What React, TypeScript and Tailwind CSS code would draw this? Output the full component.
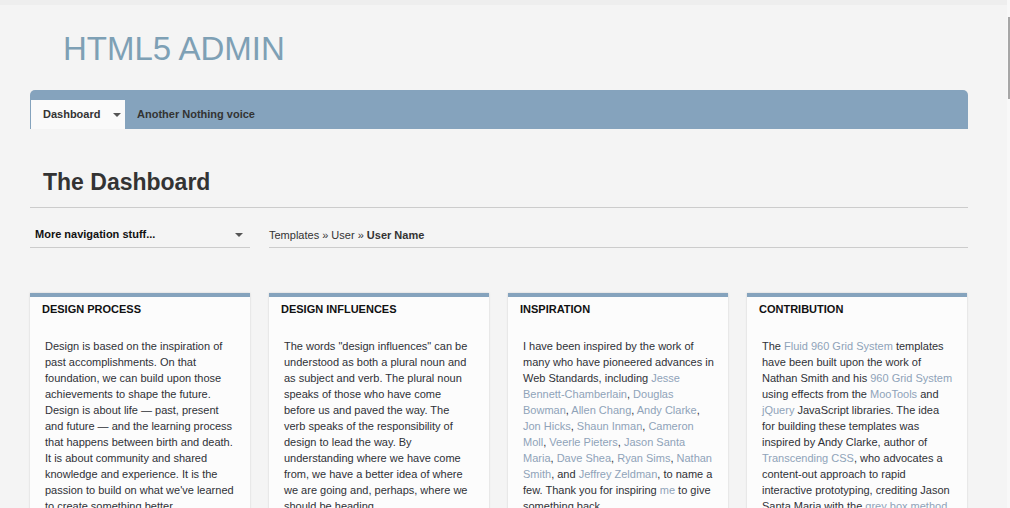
import React from "react";

const A: React.FC<{ children: React.ReactNode }> = ({ children }) => (
  <a href="#" className="text-[#8fa3b9]">
    {children}
  </a>
);

const Caret = () => (
  <span className="block w-0 h-0 border-l-[4px] border-r-[4px] border-t-[4px] border-l-transparent border-r-transparent border-t-[#555]" />
);

interface CardProps {
  title: string;
  lines: React.ReactNode[];
}

const Card: React.FC<CardProps> = ({ title, lines }) => (
  <div className="bg-[#fcfcfc] border-t-4 border-[#85a3bd] shadow-[0_0_2px_rgba(0,0,0,0.15)] h-[240px]">
    <h3 className="pl-[12px] pt-[6px] text-[11px] leading-[13px] font-bold text-[#111] uppercase">{title}</h3>
    <p className="mt-[22px] pl-[15px] text-[11px] leading-[16px] text-[#2f3137]">
      {lines.map((l, i) => (
        <span key={i} className="block whitespace-nowrap">
          {l}
        </span>
      ))}
    </p>
  </div>
);

const App: React.FC = () => {
  return (
    <div className="relative h-[508px] overflow-hidden bg-[#f4f4f4] font-['Liberation_Sans',Arial,sans-serif] text-[#333]">
      <div className="h-[5px] mr-[3px] bg-[#eeeeee]" />
      {/* scrollbar */}
      <div className="absolute right-0 top-0 h-full w-[3px] bg-[#f8f8f8]" />
      <div className="absolute right-0 top-[17px] h-[82px] w-[2px] bg-[#a6a6a6]" />

      <div className="ml-[30px] w-[938px]">
        <header className="h-[85px] pl-[33px] pt-[27px]">
          <h1 className="text-[33px] leading-[33px] text-[#7ea0b5]">HTML5 ADMIN</h1>
        </header>

        <nav className="h-[39px] bg-[#85a3bd] rounded-t-[5px] flex items-end pl-[1px]">
          <div className="h-[29px] w-[94px] bg-[#fafafa] flex items-center pl-[12px] gap-[13px] text-[11px] font-bold text-[#333]">
            Dashboard
            <Caret />
          </div>
          <div className="h-[29px] flex items-center pl-[12px] text-[11px] font-bold text-[#333]">
            Another Nothing voice
          </div>
        </nav>

        <div className="border-b border-[#cccccc] pt-[42px] pb-[13px] pl-[13px]">
          <h2 className="text-[23px] leading-[23px] font-bold text-[#333]">The Dashboard</h2>
        </div>

        <div className="flex gap-[19px] pt-[20px]">
          <div className="w-[220px] border-b border-[#cccccc] h-[20px] flex items-start justify-between pl-[5px] pr-[7px]">
            <span className="text-[11px] leading-[13px] font-bold text-[#111]">More navigation stuff...</span>
            <span className="h-[13px] flex items-center">
              <Caret />
            </span>
          </div>
          <div className="flex-1 border-b border-[#cccccc] h-[20px] text-[11px] leading-[13px] pt-[1px] text-[#333]">
            Templates » User » <b>User Name</b>
          </div>
        </div>

        <div className="grid grid-cols-4 gap-[19px] mt-[45px] w-[937px]">
          <Card
            title="Design Process"
            lines={[
              "Design is based on the inspiration of",
              "past accomplishments. On that",
              "foundation, we can build upon those",
              "achievements to shape the future.",
              "Design is about life — past, present",
              "and future — and the learning process",
              "that happens between birth and death.",
              "It is about community and shared",
              "knowledge and experience. It is the",
              "passion to build on what we've learned",
              "to create something better.",
            ]}
          />
          <Card
            title="Design Influences"
            lines={[
              'The words "design influences" can be',
              "understood as both a plural noun and",
              "as subject and verb. The plural noun",
              "speaks of those who have come",
              "before us and paved the way. The",
              "verb speaks of the responsibility of",
              "design to lead the way. By",
              "understanding where we have come",
              "from, we have a better idea of where",
              "we are going and, perhaps, where we",
              "should be heading.",
            ]}
          />
          <Card
            title="Inspiration"
            lines={[
              "I have been inspired by the work of",
              "many who have pioneered advances in",
              <>
                Web Standards, including <A>Jesse</A>
              </>,
              <>
                <A>Bennett-Chamberlain</A>, <A>Douglas</A>
              </>,
              <>
                <A>Bowman</A>, <A>Allen Chang</A>, <A>Andy Clarke</A>,
              </>,
              <>
                <A>Jon Hicks</A>, <A>Shaun Inman</A>, <A>Cameron</A>
              </>,
              <>
                <A>Moll</A>, <A>Veerle Pieters</A>, <A>Jason Santa</A>
              </>,
              <>
                <A>Maria</A>, <A>Dave Shea</A>, <A>Ryan Sims</A>, <A>Nathan</A>
              </>,
              <>
                <A>Smith</A>, and <A>Jeffrey Zeldman</A>, to name a
              </>,
              <>
                few. Thank you for inspiring <A>me</A> to give
              </>,
              "something back.",
            ]}
          />
          <Card
            title="Contribution"
            lines={[
              <>
                The <A>Fluid 960 Grid System</A> templates
              </>,
              "have been built upon the work of",
              <>
                Nathan Smith and his <A>960 Grid System</A>
              </>,
              <>
                using effects from the <A>MooTools</A> and
              </>,
              <>
                <A>jQuery</A> JavaScript libraries. The idea
              </>,
              "for building these templates was",
              "inspired by Andy Clarke, author of",
              <>
                <A>Transcending CSS</A>, who advocates a
              </>,
              "content-out approach to rapid",
              "interactive prototyping, crediting Jason",
              <>
                Santa Maria with the <A>grey box method</A>.
              </>,
            ]}
          />
        </div>
      </div>
    </div>
  );
};

export default App;
